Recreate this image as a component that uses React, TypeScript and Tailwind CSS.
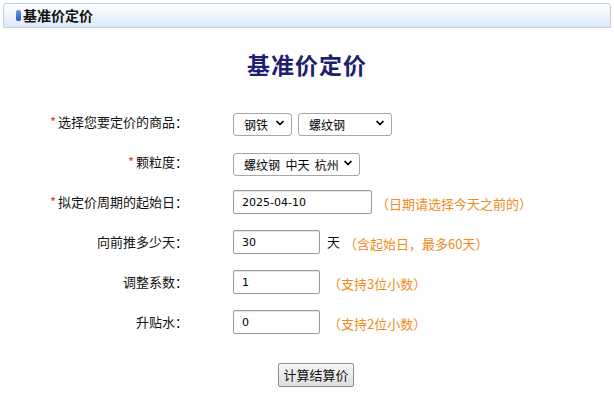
import { ChevronDown } from 'lucide-react'

const font = { fontFamily: '"Noto Sans CJK SC", "Liberation Sans", sans-serif' }

function Select({ value, width }: { value: string; width: string }) {
  return (
    <div className={`relative h-[23px] ${width}`}>
      <select
        defaultValue={value}
        className="h-full w-full appearance-none rounded-[3px] border border-[#a7a7a7] bg-white pl-[10px] text-[12px] leading-none text-black outline-none"
        style={font}
      >
        <option>{value}</option>
      </select>
      <ChevronDown size={12} strokeWidth={3.5} className="pointer-events-none absolute right-[6px] top-[6px] text-black" />
    </div>
  )
}

function Input({ value, width }: { value: string; width: string }) {
  return (
    <input
      defaultValue={value}
      className={`h-[24px] ${width} rounded-[2px] border border-[#9c9c9c] bg-white px-[8px] text-[11px] text-black shadow-[inset_0_1px_1px_rgba(0,0,0,0.12)] outline-none`}
      style={{ fontFamily: '"DejaVu Sans", "Noto Sans CJK SC", sans-serif' }}
    />
  )
}

function Row({ label, required, children }: { label: string; required?: boolean; children: React.ReactNode }) {
  return (
    <div className="flex h-[40px] items-center">
      <div className="flex w-[190px] shrink-0 items-center justify-end pr-[2px] text-[13px] text-[#111]">
        {required && <span className="mr-[2px] text-[#e23b3b]">*</span>}
        <span>{label}</span>
      </div>
      <div className="ml-[43px] flex items-center">{children}</div>
    </div>
  )
}

function Hint({ children }: { children: React.ReactNode }) {
  return <span className="text-[13px] text-[#f08c1e]">{children}</span>
}

export default function App() {
  return (
    <div className="h-[409px] w-[614px] bg-white" style={font}>
      <div className="px-[3px] pt-[3px]">
        <div className="flex h-[25px] items-center rounded-t-[3px] border border-[#c2cde0] bg-gradient-to-b from-[#ffffff] to-[#dde9f8] pl-[12px]">
          <span className="mr-[2px] h-[11px] w-[5px] rounded-[2px] bg-gradient-to-b from-[#6f9ee8] to-[#2456b8]" />
          <span className="text-[14px] font-bold text-[#111]">基准价定价</span>
        </div>
      </div>

      <h1 className="mt-[22px] text-center text-[23px] font-bold leading-[28px] tracking-[1px] text-[#1e1f6e]">基准价定价</h1>

      <div className="mt-[24px]">
        <Row label="选择您要定价的商品：" required>
          <div className="flex gap-[6px]">
            <Select value="钢铁" width="w-[59px]" />
            <Select value="螺纹钢" width="w-[94px]" />
          </div>
        </Row>
        <Row label="颗粒度：" required>
          <Select value={'螺纹钢\u00a0\u00a0中天\u00a0\u00a0杭州'} width="w-[127px]" />
        </Row>
        <Row label="拟定价周期的起始日：" required>
          <Input value="2025-04-10" width="w-[139px]" />
          <span className="ml-[4px]">
            <Hint>（日期请选择今天之前的）</Hint>
          </span>
        </Row>
        <Row label="向前推多少天：">
          <Input value="30" width="w-[87px]" />
          <span className="ml-[7px] text-[13px] text-[#111]">天</span>
          <span className="ml-[4px]">
            <Hint>（含起始日，最多60天）</Hint>
          </span>
        </Row>
        <Row label="调整系数：">
          <Input value="1" width="w-[87px]" />
          <span className="ml-[8px]">
            <Hint>（支持3位小数）</Hint>
          </span>
        </Row>
        <Row label="升贴水：">
          <Input value="0" width="w-[87px]" />
          <span className="ml-[8px]">
            <Hint>（支持2位小数）</Hint>
          </span>
        </Row>
      </div>

      <div className="mt-[21px] flex justify-center pl-[18px]">
        <button className="h-[24px] w-[76px] rounded-[2px] border border-[#8d8d8d] bg-gradient-to-b from-[#f6f6f6] to-[#dedede] text-[13px] text-[#111]">
          计算结算价
        </button>
      </div>
    </div>
  )
}
